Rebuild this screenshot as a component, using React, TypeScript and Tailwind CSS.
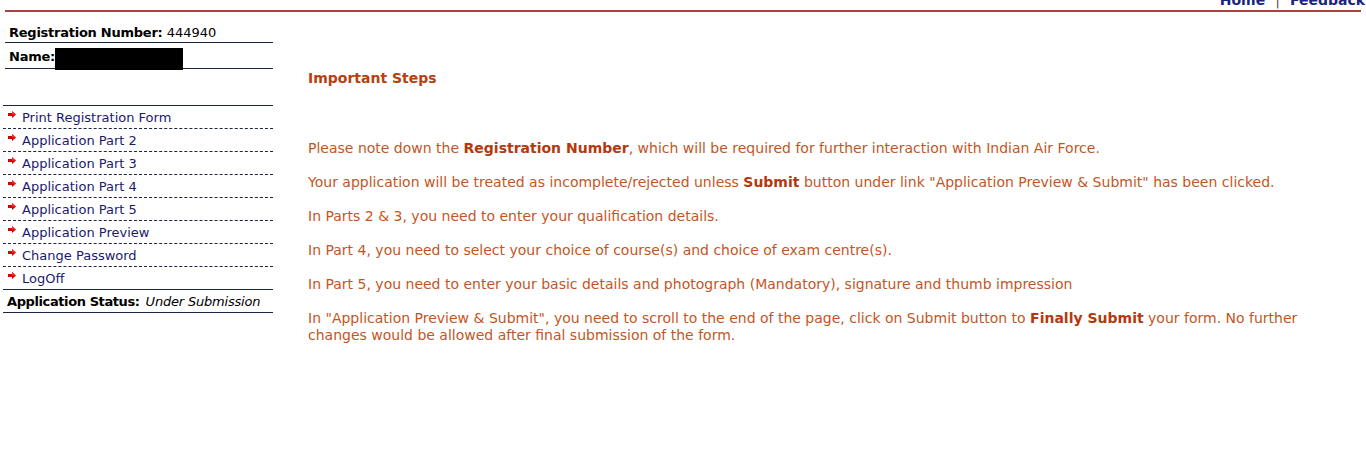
const FONT = "font-['DejaVu_Sans',Verdana,sans-serif]"

const MENU = [
  'Print Registration Form',
  'Application Part 2',
  'Application Part 3',
  'Application Part 4',
  'Application Part 5',
  'Application Preview',
  'Change Password',
  'LogOff',
]

function Bullet() {
  return (
    <svg width="8" height="7" viewBox="0 0 8 7" className="mt-[1px] shrink-0">
      <polygon points="0,2 4,2 4,0 8,3.5 4,7 4,5 0,5" fill="#d40000" />
      <polygon points="4,0 8,3.5 4,3.5" fill="#ff3030" />
    </svg>
  )
}

export default function App() {
  return (
    <div className={`h-[461px] overflow-hidden bg-white text-[13px] ${FONT}`}>
      {/* top links + rule */}
      <div className="mx-[5px] border-b-2 border-[#a8443f] pb-[2px]">
        <div className="-mt-[8px] flex justify-end text-[14px] leading-[16px] text-[#1a237e]">
          <span className="font-bold">Home</span>
          <span className="px-[10px] text-[#555]">|</span>
          <span className="-mr-[4px] font-bold">Feedback</span>
        </div>
      </div>

      <div className="flex">
        {/* Sidebar */}
        <aside className="ml-[3px] w-[270px] pt-[12px]">
          <div className="ml-[2px] border-b border-[#1c2541] py-[1px] pl-[4px] leading-[16px] text-black">
            <span className="font-bold tracking-[-0.25px]">Registration Number:</span> 444940
          </div>
          <div className="ml-[2px] flex h-[26px] items-start border-b border-[#1c2541] pl-[4px] pt-[6px] leading-[16px] text-black">
            <span className="font-bold tracking-[-0.25px]">Name:</span>
            <span className="-mt-[1px] inline-block h-[22px] w-[128px] bg-black" />
          </div>
          <div className="h-[36px]" />
          <div className="border-t border-[#1c2541]">
            {MENU.map((item, i) => (
              <div
                key={item}
                className={`flex h-[23px] items-start gap-[6px] pl-[5px] pt-[4px] text-[#1a1a6e] ${
                  i === MENU.length - 1 ? 'border-b border-solid border-[#1c2541]' : 'border-b border-dashed border-[#1c2541]'
                }`}
              >
                <Bullet />
                <span className="leading-[16px]">{item}</span>
              </div>
            ))}
            <div className="flex h-[23px] items-center whitespace-nowrap border-b border-[#1c2541] pl-[4px] pt-[1px] text-black">
              <span className="font-bold tracking-[-0.4px]">Application Status:</span>
              <span className="ml-[6px] italic tracking-[-0.2px]">Under Submission</span>
            </div>
          </div>
        </aside>

        {/* Main */}
        <main className="ml-[35px] w-[1010px] pt-[58px] text-[14px] text-[#c3561f]">
          <h2 className="mb-[53px] font-bold leading-[17px] text-[#b8400f]">Important Steps</h2>
          <p className="mb-[17px] leading-[17px]">
            Please note down the <b className="text-[#b5380d]">Registration Number</b>, which will be required for further interaction with Indian Air Force.
          </p>
          <p className="mb-[17px] leading-[17px]">
            Your application will be treated as incomplete/rejected unless <b className="text-[#b5380d]">Submit</b> button under link "Application Preview &amp; Submit" has been clicked.
          </p>
          <p className="mb-[17px] leading-[17px]">In Parts 2 &amp; 3, you need to enter your qualification details.</p>
          <p className="mb-[17px] leading-[17px]">In Part 4, you need to select your choice of course(s) and choice of exam centre(s).</p>
          <p className="mb-[17px] leading-[17px]">
            In Part 5, you need to enter your basic details and photograph (Mandatory), signature and thumb impression
          </p>
          <p className="mb-[17px] leading-[17px]">
            In "Application Preview &amp; Submit", you need to scroll to the end of the page, click on Submit button to{' '}
            <b className="text-[#b5380d]">Finally Submit</b> your form. No further changes would be allowed after final submission of the form.
          </p>
        </main>
      </div>
    </div>
  )
}
